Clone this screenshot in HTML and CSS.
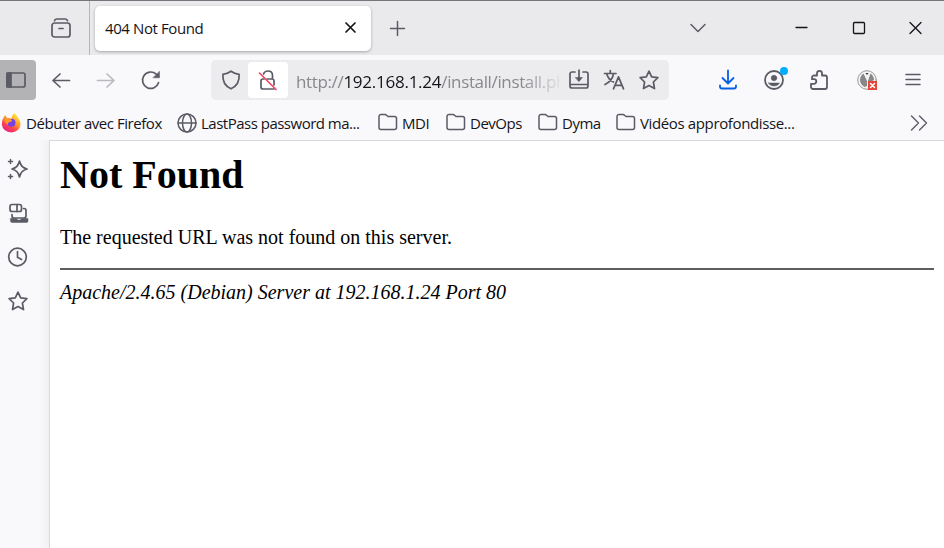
FILE: index.html
```
<!DOCTYPE html>
<html lang="fr">
<head>
<meta charset="utf-8">
<title>404 Not Found</title>
<link rel="stylesheet" href="styles.css">
</head>
<body>
<div class="browser">
  <header class="tabstrip">
    <div class="recent"><svg class="icon" viewBox="0 0 20 20"><rect x="1" y="5" width="18" height="14" rx="2.5"/><path d="M3.500 2.600Q4.200 1 6 1h8q1.800 0 2.500 1.600M8 10.500h4"/></svg></div>
    <div class="tab"><span class="tab-title">404 Not Found</span><svg class="icon ink" viewBox="0 0 20 20"><path d="M5 5l9 9M14 5l-9 9"/></svg></div>
    <svg class="icon newtab" viewBox="0 0 20 20"><path d="M9.500 3.500v14M2.500 10.500h14"/></svg>
    <svg class="icon alltabs" viewBox="0 0 20 20"><path d="M3 6.500l7 7 7-7"/></svg>
    <div class="window-controls">
      <svg class="icon" viewBox="0 0 20 20"><path d="M5 9.500h11"/></svg>
      <svg class="icon" viewBox="0 0 20 20"><rect x="5.500" y="4.500" width="11" height="11" rx="1"/></svg>
      <svg class="icon" viewBox="0 0 20 20"><path d="M5 4.500l11 11M16 4.500l-11 11"/></svg>
    </div>
  </header>

  <nav class="navbar">
    <div class="sidebar-toggle"><svg class="icon" viewBox="0 0 20 20"><rect x="1" y="3" width="18" height="14" rx="2"/><path class="solid" d="M1 3h4v14H1z"/></svg></div>
    <svg class="icon back" viewBox="0 0 20 20"><path d="M18.500 10.500H2M9 4l-7 6.500L9 17"/></svg>
    <svg class="icon forward" viewBox="0 0 20 20"><path d="M1.500 10.500H18M11 4l7 6.500-7 6.500"/></svg>
    <svg class="icon reload" viewBox="0 0 20 20"><path d="M17.600 12.500A8.200 8.200 0 1 1 15.200 4.100"/><path class="solid thin" d="M18.500 1.500v6.300h-6.300z"/></svg>
    <div class="urlbar">
      <svg class="icon shield" viewBox="0 0 20 20"><path d="M10 1.200C7.500 3 4.500 4 1.900 4.300c-.5 6.600 2.400 12 8.100 14.500 5.700-2.500 8.600-7.900 8.100-14.500C15.500 4 12.500 3 10 1.200z"/></svg>
      <div class="insecure"><svg class="icon" viewBox="0 0 20 20"><path d="M6 9H5a2 2 0 0 0-2 2v6a2 2 0 0 0 2 2h11M9 9h5a2 2 0 0 1 2 2v4M5.500 4Q6.500 1 10 1q4.500 0 4.500 4.500V9"/><path class="slash" d="M1.500 3l16.500 16.500"/></svg></div>
      <div class="url">http://<b>192.168.1.24</b>/install/install.php</div>
      <svg class="icon" viewBox="0 0 20 20"><path d="M6 2H3a2 2 0 0 0-2 2v12a2 2 0 0 0 2 2h14a2 2 0 0 0 2-2V4a2 2 0 0 0-2-2h-3M1.500 14.500h17M10 0v10"/><path class="solid thin" d="M6.500 7.500h7L10 11.500z"/></svg>
      <svg class="icon" viewBox="0 0 20 20"><path d="M.5 3.500H12M6.300.5v3M9.500 4C8.500 9 5 12.500 1 14.500M2.800 4C4 8 7 11 9.500 12M9.500 18.800l5-12 5 12M11 15.300h7"/></svg>
      <svg class="icon" viewBox="0 0 20 20"><path d="M10 1.200l2.700 5.700 6.200.8-4.500 4.300 1.100 6.600-5.500-3.100-5.500 3.100L5.600 12 1.100 7.700l6.200-.8z"/></svg>
    </div>
    <div class="actions">
      <svg class="icon download" viewBox="0 0 20 20"><path d="M10 .5v12.500M4.500 8l5.500 5.500L15.500 8M2 15.500v1a2 2 0 0 0 2 2h12a2 2 0 0 0 2-2v-1"/></svg>
      <div class="account"><svg class="icon" viewBox="0 0 20 20"><circle cx="10" cy="10" r="9"/><circle class="solid thin" cx="10" cy="8" r="2.800"/><path class="solid thin" d="M4.500 13h11Q14 16 10 16t-5.500-3z"/></svg><span class="badge"></span></div>
      <svg class="icon" viewBox="0 0 20 20"><path d="M3.500 5.500H7V3.300a2.500 2.500 0 0 1 5 0v2.200h3a2 2 0 0 1 2 2V17a2 2 0 0 1-2 2h-12a2 2 0 0 1-2-2v-3.200H4a2.300 2.300 0 0 0 0-4.600H2V7.500a2 2 0 0 1 1.500-2z"/></svg>
      <svg class="icon extension" viewBox="0 0 20 20"><circle cx="10" cy="10" r="9.300" fill="#f4f4f4" stroke="#999" stroke-width="1"/><path d="M6.500 3.500Q3 6 3 10t4.500 7l2.500-1V11zM13.500 3.500Q17 6 17 10l-5 3-1-2z" fill="#888"/><path d="M8.500 3h3L10 5z" fill="#333"/><path d="M11 11h9v9h-9z" fill="#e34438"/><path d="M13.500 13.500l4 4m0-4l-4 4" stroke="#fff" stroke-width="1.600"/></svg>
      <svg class="icon menu" viewBox="0 0 20 20"><path d="M3 4.500h14M3 9.500h14M3 14.500h14"/></svg>
    </div>
  </nav>

  <div class="bookmarks">
    <span class="bookmark firefox"><svg viewBox="0 0 20 20"><defs><linearGradient id="flame" x1=".85" y1="0" x2=".2" y2="1"><stop offset=".1" stop-color="#ffe53b"/><stop offset=".45" stop-color="#ff9428"/><stop offset=".7" stop-color="#ff4052"/><stop offset="1" stop-color="#e9189a"/></linearGradient></defs><path d="M13 0q4 3 4.200 5.500Q20 8 19.500 12 18 19 10.500 19.500 2 19 .8 11.500.5 7 3 4l1-2 2 3q3-.5 4.500 1Q11 2 13 0z" fill="url(#flame)"/><circle cx="10.500" cy="9.800" r="4" fill="#7542e5"/><path d="M3 6q4-2 8 1 0 2-3 2.200-1.500.5-1 2.300-3-1-4-5.500z" fill="#ff9a24"/></svg>Débuter avec Firefox</span>
    <span class="bookmark lastpass"><svg class="icon" viewBox="0 0 20 20"><g class="fine"><circle cx="10" cy="10" r="9"/><ellipse cx="10" cy="10" rx="4.500" ry="9"/><path d="M1 10h18"/></g></svg>LastPass password ma...</span>
    <span class="bookmark mdi"><svg class="icon" viewBox="0 0 20 20"><path class="fine" d="M3 1.500h4q1 0 1.500.7L10 3.500h6.500a2 2 0 0 1 2 2v9a2 2 0 0 1-2 2H3a2 2 0 0 1-2-2v-11a2 2 0 0 1 2-2z"/></svg>MDI</span>
    <span class="bookmark devops"><svg class="icon" viewBox="0 0 20 20"><path class="fine" d="M3 1.500h4q1 0 1.500.7L10 3.500h6.500a2 2 0 0 1 2 2v9a2 2 0 0 1-2 2H3a2 2 0 0 1-2-2v-11a2 2 0 0 1 2-2z"/></svg>DevOps</span>
    <span class="bookmark dyma"><svg class="icon" viewBox="0 0 20 20"><path class="fine" d="M3 1.500h4q1 0 1.500.7L10 3.500h6.500a2 2 0 0 1 2 2v9a2 2 0 0 1-2 2H3a2 2 0 0 1-2-2v-11a2 2 0 0 1 2-2z"/></svg>Dyma</span>
    <span class="bookmark videos"><svg class="icon" viewBox="0 0 20 20"><path class="fine" d="M3 1.500h4q1 0 1.500.7L10 3.500h6.500a2 2 0 0 1 2 2v9a2 2 0 0 1-2 2H3a2 2 0 0 1-2-2v-11a2 2 0 0 1 2-2z"/></svg>Vidéos approfondisse...</span>
    <svg class="icon overflow" viewBox="0 0 20 20"><path d="M2.500 3l7 7-7 7M10.500 3l7 7-7 7"/></svg>
  </div>

  <div class="body">
    <aside class="sidebar">
      <svg class="icon" viewBox="0 0 20 20"><path d="M11.500 2q1.300 6.500 7.500 8-6.200 1.500-7.500 8Q10.200 11.500 4 10q6.200-1.500 7.500-8z"/><path class="fine" d="M2.500.5v4M.5 2.500h4M2.500 15.500v4M.5 17.500h4"/></svg>
      <svg class="icon" viewBox="0 0 20 20"><rect x="2" y="1.500" width="11.500" height="7" rx="2"/><path d="M9 1.500v7M15.500 5.500H16a2 2 0 0 1 2 2V13a2 2 0 0 1-2 2H6a2 2 0 0 1-2-2v-1.500"/><path class="solid thin" d="M2.500 15.500h6l1 1.500h3l1-1.500H20V18a1.500 1.500 0 0 1-1.500 1.500H4A1.500 1.500 0 0 1 2.500 18z"/></svg>
      <svg class="icon" viewBox="0 0 20 20"><circle cx="9.500" cy="10" r="8.800"/><path d="M9.500 4.500v5.800l4 2.200"/></svg>
      <svg class="icon" viewBox="0 0 20 20"><path d="M10 1.200l2.700 5.700 6.200.8-4.500 4.300 1.100 6.600-5.500-3.100-5.500 3.100L5.600 12 1.100 7.700l6.200-.8z"/></svg>
    </aside>
    <main class="page">
      <h1>Not Found</h1>
      <p>The requested URL was not found on this server.</p>
      <hr>
      <address>Apache/2.4.65 (Debian) Server at 192.168.1.24 Port 80</address>
    </main>
  </div>
</div>
</body>
</html>
```
FILE: styles.css
```
* { box-sizing: border-box; }
body { margin: 0; background: #f9f9fb; }
.browser {
  width: 944px; height: 548px; overflow: hidden;
  display: flex; flex-direction: column;
  font: 15px/20px "Open Sans", "Noto Sans", sans-serif;
  color: #15141a;
}
.icon {
  display: block; width: 20px; height: 20px; flex: none; overflow: visible;
  fill: none; stroke: #5b5b66; stroke-width: 1.7;
  stroke-linecap: round; stroke-linejoin: round;
}
.solid { fill: #5b5b66; }
.thin { stroke-width: .5; }
.fine { stroke-width: 1.5; }
.ink { stroke: #15141a; stroke-width: 1.7; }

.tabstrip {
  height: 55px; flex: none; display: flex; align-items: center;
  background: #eaeaec; border-top: 1px solid #77747c;
}
.recent { width: 90px; height: 54px; padding: 17px 0 0 51px; border-right: 1px solid #b5b5b9; }
.tab {
  width: 276px; height: 45px; margin-left: 5px; padding: 0 10px;
  display: flex; align-items: center; justify-content: space-between;
  background: #fff; border-radius: 5px; box-shadow: 0 1px 3px #0000004d;
}
.tab-title { letter-spacing: -.4px; }
.newtab { margin-left: 17px; stroke-width: 1.5; }
.alltabs { margin-left: 280px; stroke-width: 1.5; }
.window-controls { display: flex; gap: 37px; margin-left: 83px; }
.window-controls .icon { stroke: #15141a; stroke-width: 1.3; }

.navbar { height: 50px; flex: none; display: flex; align-items: center; }
.sidebar-toggle {
  width: 36px; height: 40px; padding: 10px 0 0 6px;
  background: #b3b3b6; border-radius: 0 4px 4px 0;
}
.back { margin-left: 15px; }
.forward { margin-left: 25px; opacity: .4; }
.reload { margin-left: 25px; }
.urlbar {
  width: 458px; height: 40px; margin-left: 50px; padding: 0 10px;
  display: flex; align-items: center; gap: 15px;
  background: #ececee; border-radius: 5px;
}
.urlbar .solid { fill: #55555c; }
.insecure {
  width: 40px; height: 36px; margin-left: -8px; padding: 8px 0 0 10px;
  background: #fff; border-radius: 4px;
}
.slash { stroke: #f0405f; stroke-width: 1.6; }
.url {
  width: 264px; margin: 3px -6px 0 -7px; overflow: hidden; white-space: nowrap;
  font-size: 17px; line-height: 24px; color: #88888d; letter-spacing: -.36px;
  -webkit-mask-image: linear-gradient(to right, #000 225px, transparent 268px);
  mask-image: linear-gradient(to right, #000 225px, transparent 268px);
}
.url b { font-weight: 400; color: #15141a; letter-spacing: -.25px; }
.actions { display: flex; gap: 26px; margin-left: 49px; }
.actions .icon { stroke-width: 1.8; }
.actions .download { stroke: #0561e1; }
.actions .extension { stroke: none; margin-left: 1px; }
.actions .menu { stroke-width: 1.5; }
.actions .thin { stroke-width: .5; }
.account { position: relative; }
.badge {
  position: absolute; top: -3px; right: -4px; width: 8px; height: 8px;
  border-radius: 50%; background: #00aeff;
}

.bookmarks { height: 35px; flex: none; display: flex; align-items: center; padding-top: 1px; }
.bookmark { display: flex; align-items: center; gap: 4px; flex: none; white-space: nowrap; letter-spacing: -.45px; }
.bookmark svg { width: 20px; height: 20px; }
.firefox { width: 177px; padding-left: 1px; gap: 5px; }
.lastpass { width: 201px; letter-spacing: -.5px; }
.mdi { width: 68px; }
.devops { width: 92px; letter-spacing: -.5px; }
.dyma { width: 78px; letter-spacing: -.5px; }
.videos { width: 293px; letter-spacing: -.37px; }
.overflow { stroke-width: 1.4; }

.body { flex: 1; display: flex; min-height: 0; }
.sidebar {
  width: 49px; flex: none; padding: 19px 0 0 8px;
  display: flex; flex-direction: column; gap: 24px;
  background: linear-gradient(to right, #f9f9fb 38px, #f1f1f4);
}
.page {
  flex: 1; padding: 0 10px; background: #fff; color: #000;
  border: solid #d9d9dd; border-width: 1px 0 0 1px;
  font: 20px/23px "Liberation Serif", serif;
}
h1 { margin: 11px 0 28px; font-size: 40px; line-height: 46px; }
p { margin: 0 0 19px; }
hr { height: 2px; margin: 0 0 11px; border: 0; background: #5e5e5e; }
```
